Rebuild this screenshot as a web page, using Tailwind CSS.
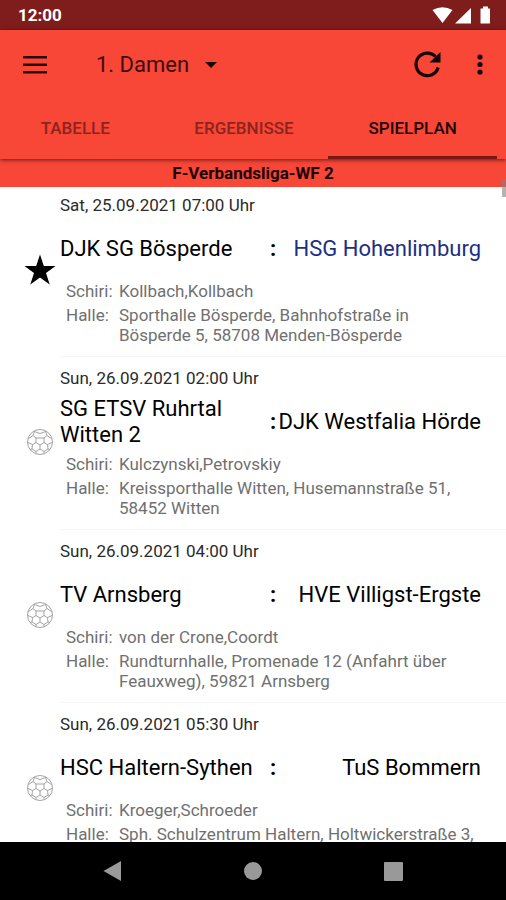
<!DOCTYPE html>
<html lang="de">
<head>
<meta charset="utf-8">
<meta name="viewport" content="width=device-width, initial-scale=1">
<title>Spielplan</title>
<script src="https://cdn.jsdelivr.net/npm/@tailwindcss/browser@4"></script>
</head>
<body class="flex h-screen flex-col overflow-hidden bg-white font-['Roboto',sans-serif] text-black">
<svg class="hidden" aria-hidden="true">
  <symbol id="ball" viewBox="0 0 28 28">
    <g fill="none" stroke="#999" stroke-width="0.900" stroke-linejoin="round">
      <circle cx="14" cy="14" r="12.5"/>
      <path d="M10 10h8v4.500l-4 2.500-4-2.500zM10 10 7 7.500 8.500 3.500M18 10l3-2.500-1.500-4M7 7.500 2.500 10.500M21 7.500l4.500 3M10 14.500l-3.500 2-4.500-2M18 14.500l3.500 2 4.500-2M14 17v4l-4 2.500M14 21l4 2.500M6.500 16.500 6 21l4 2.500v2M21.500 16.500 22 21l-4 2.500v2M6 21l-2 .5M22 21l2 .5M8.500 3.500 14 5.500l5.500-2"/>
    </g>
  </symbol>
</svg>

<div class="flex h-[30px] shrink-0 items-center justify-between bg-[#7f1d1d] pl-[18px] pr-4 text-white">
  <span class="text-[17px] font-bold leading-5">12:00</span>
  <svg class="h-[18px] w-[58px]" viewBox="0 0 58 18" fill="#fff" aria-hidden="true">
    <path d="M0.500 4Q10.500 -1.500 20.500 4L10.500 17zM39 2v15.500H23zM48.500 3Q48.500 2.500 49 2.500h2V.5h5v2h1.500q.5 0 .5.500v14q0 .5-.5.500H49q-.5 0-.5-.5z"/>
  </svg>
</div>

<header class="relative z-10 shrink-0 bg-[#f84637] shadow-[0_1px_4px_rgba(0,0,0,0.6)]">
  <div class="flex h-[70px] items-center pl-[23px] pr-5">
    <button type="button" aria-label="Menü" class="h-6 w-6">
      <svg viewBox="0 0 24 24" class="h-6 w-6" stroke="#2a0806" stroke-width="2.400" aria-hidden="true"><path d="M0 4.200h24M0 11.700h24M0 19.200h24"/></svg>
    </button>
    <button type="button" class="ml-[49px] flex items-center gap-4 text-[22px] leading-7 text-[#3b0d0a]">1. Damen
      <svg viewBox="0 0 12 6" class="h-[6px] w-3" fill="#1c0403" aria-hidden="true"><path d="M0 0h12L6 6z"/></svg>
    </button>
    <button type="button" aria-label="Aktualisieren" class="ml-auto h-7 w-7">
      <svg viewBox="0 0 28 28" class="h-7 w-7" aria-hidden="true"><path d="M25.200 16.500A11.300 11.300 0 1 1 22.500 5.500" fill="none" stroke="#140302" stroke-width="3.200"/><path d="M27.500 1v10.500H16.500z" fill="#140302"/></svg>
    </button>
    <button type="button" aria-label="Weitere Optionen" class="ml-[33px] h-6 w-3">
      <svg viewBox="0 0 12 24" class="h-6 w-3" fill="#1c0403" aria-hidden="true"><circle cx="6" cy="4" r="2.600"/><circle cx="6" cy="11.500" r="2.600"/><circle cx="6" cy="19" r="2.600"/></svg>
    </button>
  </div>
  <nav class="-ml-[9px] mr-[9px] grid h-[59px] grid-cols-3 text-center text-[17px] font-medium leading-5 text-[#8c241c]">
    <a href="#tabelle" class="pt-[18px]">TABELLE</a>
    <a href="#ergebnisse" class="pt-[18px]">ERGEBNISSE</a>
    <a href="#spielplan" aria-current="page" class="border-b-3 border-[#7a1712] pt-[18px] text-[#1c0403]">SPIELPLAN</a>
  </nav>
</header>

<main class="relative min-h-0 grow">
  <div class="h-full overflow-hidden">
  <h1 class="h-7 bg-[#f84637] pt-1 text-center text-[17px] font-bold leading-5 text-[#1c0403]">F-Verbandsliga-WF 2</h1>
  <ul>
    <li class="flex items-center pl-6">
      <svg class="mb-[5px] h-8 w-8 shrink-0" viewBox="0 0 32 32" aria-hidden="true"><path d="M16 0.500 19.800 12H31.500L22 19l3.700 11.500L16 23.500 6.300 30.500 10 19 0.500 12h11.700z"/></svg>
      <article class="ml-1 grow border-b border-[#f5f5f5] pb-[11px] pr-[25px] pt-2">
        <p class="text-[17px] leading-5 text-[#2b2b2b]">Sat, 25.09.2021 07:00 Uhr</p>
        <h2 class="mt-2 grid h-[52px] grid-cols-[209fr_8px_204fr] items-center text-[22px] leading-[26px]"><span>DJK SG Bösperde</span><b class="text-center font-bold">:</b><span class="whitespace-nowrap text-right text-[#1a2f86]">HSG Hohenlimburg</span></h2>
        <dl class="mt-[6px] grid grid-cols-[53px_1fr] gap-y-1 pl-[6px] text-[17px] leading-5 text-[#707070]"><dt>Schiri:</dt><dd>Kollbach,Kollbach</dd><dt>Halle:</dt><dd>Sporthalle Bösperde, Bahnhofstraße in Bösperde 5, 58708 Menden-Bösperde</dd></dl>
      </article>
    </li>
    <li class="flex items-center pl-[26px]">
      <svg class="mb-[3px] h-7 w-7 shrink-0" aria-hidden="true"><use href="#ball"/></svg>
      <article class="ml-[6px] grow border-b border-[#f5f5f5] pb-[11px] pr-[25px] pt-[11px]">
        <p class="text-[17px] leading-5 text-[#2b2b2b]">Sun, 26.09.2021 02:00 Uhr</p>
        <h2 class="mt-2 grid h-[52px] grid-cols-[209fr_8px_204fr] items-center text-[22px] leading-[26px]"><span>SG ETSV Ruhrtal Witten 2</span><b class="text-center font-bold">:</b><span class="whitespace-nowrap text-right">DJK Westfalia Hörde</span></h2>
        <dl class="mt-[6px] grid grid-cols-[53px_1fr] gap-y-1 pl-[6px] text-[17px] leading-5 text-[#707070]"><dt>Schiri:</dt><dd>Kulczynski,Petrovskiy</dd><dt>Halle:</dt><dd>Kreissporthalle Witten, Husemannstraße 51, 58452 Witten</dd></dl>
      </article>
    </li>
    <li class="flex items-center pl-[26px]">
      <svg class="mb-[3px] h-7 w-7 shrink-0" aria-hidden="true"><use href="#ball"/></svg>
      <article class="ml-[6px] grow border-b border-[#f5f5f5] pb-[11px] pr-[25px] pt-[11px]">
        <p class="text-[17px] leading-5 text-[#2b2b2b]">Sun, 26.09.2021 04:00 Uhr</p>
        <h2 class="mt-2 grid h-[52px] grid-cols-[209fr_8px_204fr] items-center text-[22px] leading-[26px]"><span>TV Arnsberg</span><b class="text-center font-bold">:</b><span class="whitespace-nowrap text-right">HVE Villigst-Ergste</span></h2>
        <dl class="mt-[6px] grid grid-cols-[53px_1fr] gap-y-1 pl-[6px] text-[17px] leading-5 text-[#707070]"><dt>Schiri:</dt><dd>von der Crone,Coordt</dd><dt>Halle:</dt><dd>Rundturnhalle, Promenade 12 (Anfahrt über Feauxweg), 59821 Arnsberg</dd></dl>
      </article>
    </li>
    <li class="flex items-center pl-[26px]">
      <svg class="mb-[3px] h-7 w-7 shrink-0" aria-hidden="true"><use href="#ball"/></svg>
      <article class="ml-[6px] grow border-b border-[#f5f5f5] pb-[31px] pr-[25px] pt-[11px]">
        <p class="text-[17px] leading-5 text-[#2b2b2b]">Sun, 26.09.2021 05:30 Uhr</p>
        <h2 class="mt-2 grid h-[52px] grid-cols-[209fr_8px_204fr] items-center text-[22px] leading-[26px]"><span>HSC Haltern-Sythen</span><b class="text-center font-bold">:</b><span class="whitespace-nowrap text-right">TuS Bommern</span></h2>
        <dl class="mt-[6px] grid grid-cols-[53px_1fr] gap-y-1 pl-[6px] text-[17px] leading-5 text-[#707070]"><dt>Schiri:</dt><dd>Kroeger,Schroeder</dd><dt>Halle:</dt><dd>Sph. Schulzentrum Haltern, Holtwickerstraße 3,</dd></dl>
      </article>
    </li>
  </ul>
  </div>
  <div class="absolute right-0 top-5 h-[18px] w-1 bg-[#808080]/60"></div>
</main>

<footer class="grid h-[58px] shrink-0 grid-cols-[1fr_20px_1fr] items-center bg-black">
  <button type="button" aria-label="Zurück" class="ml-auto mr-[120px] h-5 w-5"><svg viewBox="0 0 20 20" class="h-5 w-5" fill="#999" aria-hidden="true"><path d="M0.500 10 18 0v20z"/></svg></button>
  <button type="button" aria-label="Startseite" class="h-[18px] w-[18px] justify-self-center rounded-full bg-[#999]"></button>
  <button type="button" aria-label="Übersicht" class="ml-[121px] h-[19px] w-[19px] rounded-[1px] bg-[#999]"></button>
</footer>
</body>
</html>
